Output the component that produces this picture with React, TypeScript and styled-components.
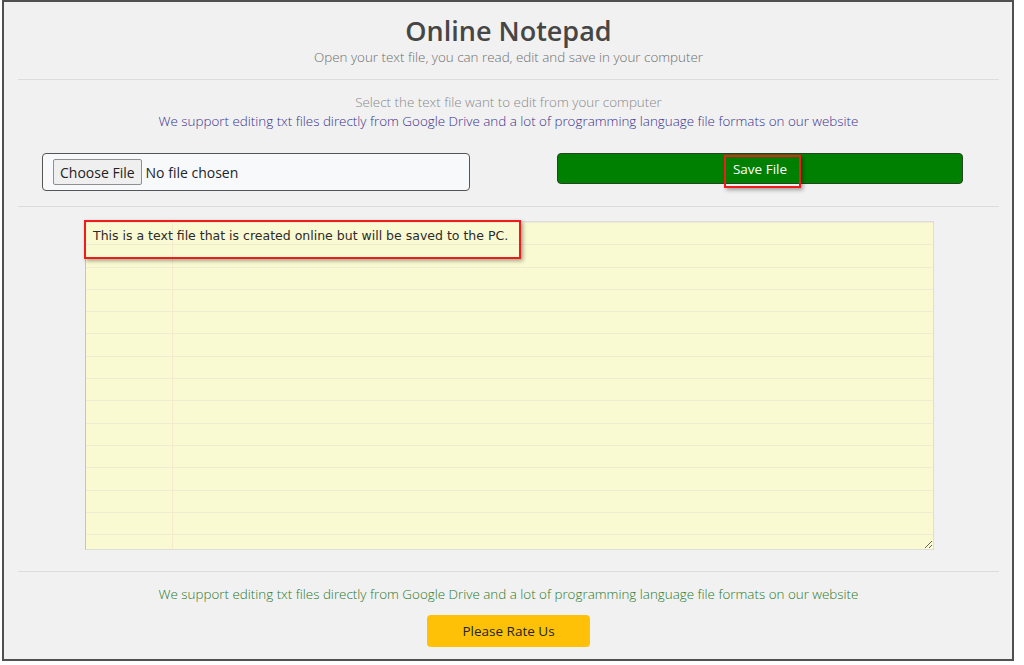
import styled, { createGlobalStyle } from "styled-components";

const Global = createGlobalStyle`
  body {
    margin: 0;
    background: #ffffff;
  }
`;

const Frame = styled.div`
  box-sizing: border-box;
  width: 1012px;
  height: 661px;
  margin-left: 2px;
  border: 2px solid #505050;
  background: #f1f1f1;
  padding: 0 13px 0 14px;
  font-family: "Open Sans", sans-serif;
  display: flex;
  flex-direction: column;
  align-items: stretch;
`;

const Header = styled.header`
  padding-top: 12px;
  text-align: center;
`;

const Titulo = styled.h1`
  margin: 0;
  font-size: 27px;
  line-height: 34px;
  font-weight: 600;
  color: #464646;
`;

const Linha = styled.p<{ $cor?: string; $topo?: number }>`
  margin: ${(p) => p.$topo ?? 0}px 0 0;
  text-align: center;
  font-size: 13.4px;
  line-height: 19px;
  font-weight: 300;
  color: ${(p) => p.$cor ?? "#6c757d"};
`;

const Divisor = styled.hr<{ $topo: number }>`
  margin: ${(p) => p.$topo}px 0 0;
  border: 0;
  border-top: 1px solid #dcdcdc;
  height: 0;
`;

const Controles = styled.div`
  display: flex;
  align-items: flex-start;
  margin-top: 22px;
  padding-left: 24px;
  gap: 87px;
`;

const CampoArquivo = styled.input`
  box-sizing: border-box;
  width: 428px;
  height: 38px;
  margin: 0;
  border: 1px solid #555;
  border-radius: 4px;
  background: #f8f9fb;
  padding: 5px 10px;
  font-family: "Open Sans", sans-serif;
  font-size: 14px;
  color: #212529;

  &::file-selector-button {
    font: inherit;
    height: 26px;
    padding: 0 6px;
    margin-right: 4px;
    border: 1px solid #8f8f8f;
    border-radius: 2px;
    background: #efefef;
    color: #222;
  }
`;

const CaixaBotao = styled.div`
  position: relative;
`;

const BotaoSalvar = styled.button`
  box-sizing: border-box;
  width: 406px;
  height: 31px;
  border: 1px solid #24471f;
  border-radius: 4px;
  background: #008000;
  color: #ffffff;
  font-family: "Open Sans", sans-serif;
  font-size: 13.5px;
`;

const Destaque = styled.div<{ $x: number; $y: number; $w: number; $h: number }>`
  position: absolute;
  left: ${(p) => p.$x}px;
  top: ${(p) => p.$y}px;
  width: ${(p) => p.$w}px;
  height: ${(p) => p.$h}px;
  box-sizing: border-box;
  border: 2px solid #ee1c1c;
  box-shadow: 2px 2px 4px rgba(0, 0, 0, 0.35);
  pointer-events: none;
`;

const Folha = styled.div`
  position: relative;
  margin: 14px 0 0 67px;
  width: 849px;
`;

const AreaTexto = styled.textarea`
  display: block;
  box-sizing: border-box;
  width: 849px;
  height: 329px;
  margin: 0;
  padding: 3px 7px;
  border: 1px solid #dddddd;
  border-left-color: #c4c4c4;
  outline: none;
  resize: both;
  color: #2b2b2b;
  font-family: "DejaVu Sans", Verdana, sans-serif;
  font-size: 12.5px;
  line-height: 22.3px;
  background-color: #fafad2;
  background-image:
    linear-gradient(90deg, transparent 86px, #f3ebcb 86px, #f3ebcb 87px, transparent 87px),
    repeating-linear-gradient(to bottom, #efecd3 0, #efecd3 1px, transparent 1px, transparent 22.3px);
`;

const BotaoAvaliar = styled.button`
  align-self: center;
  margin-top: 11px;
  width: 163px;
  height: 32px;
  border: 0;
  border-radius: 4px;
  background: #ffc107;
  color: #212529;
  font-family: "Open Sans", sans-serif;
  font-size: 13.5px;
`;

export default function App() {
  return (
    <>
      <Global />
      <Frame>
        <Header>
          <Titulo>Online Notepad</Titulo>
          <Linha $cor="#6f6f6f">Open your text file, you can read, edit and save in your computer</Linha>
        </Header>
        <Divisor $topo={12} />
        <Linha $topo={13} $cor="#8a8a8a">Select the text file want to edit from your computer</Linha>
        <Linha $cor="#3b3290">
          We support editing txt files directly from Google Drive and a lot of programming language file formats on our website
        </Linha>
        <Controles>
          <CampoArquivo type="file" />
          <CaixaBotao>
            <BotaoSalvar type="button">Save File</BotaoSalvar>
            <Destaque $x={167} $y={2} $w={77} $h={33} />
          </CaixaBotao>
        </Controles>
        <Divisor $topo={15} />
        <Folha>
          <AreaTexto
            spellCheck={false}
            defaultValue="This is a text file that is created online but will be saved to the PC."
          />
          <Destaque $x={-1} $y={-1} $w={437} $h={39} />
        </Folha>
        <Divisor $topo={21} />
        <Linha $topo={13} $cor="#2b7a2b">
          We support editing txt files directly from Google Drive and a lot of programming language file formats on our website
        </Linha>
        <BotaoAvaliar type="button">Please Rate Us</BotaoAvaliar>
      </Frame>
    </>
  );
}
